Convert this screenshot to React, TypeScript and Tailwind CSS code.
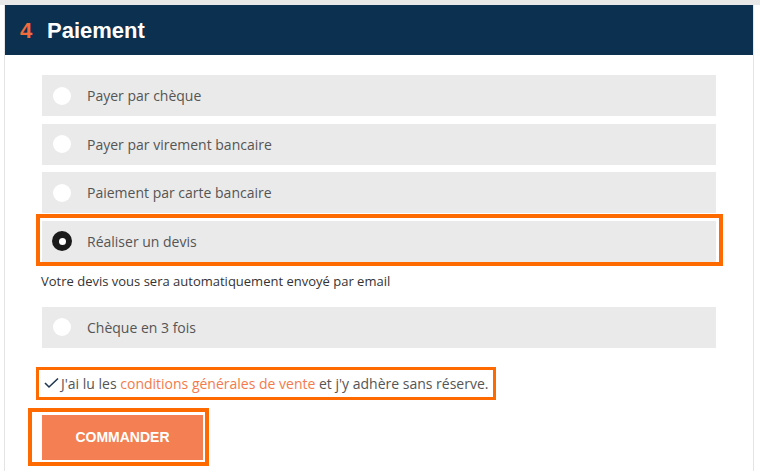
import React from "react";

function Radio({ checked }: { checked?: boolean }) {
  if (checked) {
    return (
      <span className="w-[20px] h-[20px] rounded-full bg-[#1a1a1a] flex items-center justify-center ml-[10px] mr-[15px]">
        <span className="w-[7px] h-[7px] rounded-full bg-white" />
      </span>
    );
  }
  return <span className="w-[18px] h-[18px] rounded-full bg-white ml-[11px] mr-[16px]" />;
}

function Option({ label, checked }: { label: string; checked?: boolean }) {
  return (
    <div className="relative h-[41px] bg-[#eaeaea] flex items-center text-[14px] text-[#555555]">
      <Radio checked={checked} />
      <span>{label}</span>
      {checked && (
        <div className="absolute top-[-7px] left-[-6px] right-[-7px] bottom-[-4px] border-4 border-[#ff6a00]" />
      )}
    </div>
  );
}

export default function App() {
  return (
    <div className="w-[760px] h-[471px] bg-white overflow-hidden font-['Open_Sans',sans-serif]">
      <div className="h-[5px] bg-[#e8e8e8]" />
      <div className="ml-[4px] w-[750px] h-[466px] border-l border-r border-[#e4e4e4]">
        <div className="h-[50px] bg-[#0c3050] flex items-center pl-[15px] font-['Liberation_Sans',Arial,sans-serif] font-bold text-[22px]">
          <span className="text-[#f26b3b] w-[27px]">4</span>
          <span className="text-white">Paiement</span>
        </div>
        <div className="px-[37px] pt-[20px] flex flex-col">
          <div className="flex flex-col gap-[7.5px]">
            <Option label="Payer par chèque" />
            <Option label="Payer par virement bancaire" />
            <Option label="Paiement par carte bancaire" />
            <Option label="Réaliser un devis" checked />
          </div>
          <div className="mt-[10px] h-[19px] leading-[19px] text-[13px] text-[#333333] -ml-[1px]">
            Votre devis vous sera automatiquement envoyé par email
          </div>
          <div className="mt-[16px]">
            <Option label="Chèque en 3 fois" />
          </div>
          <div className="mt-[19px] -ml-[6px] self-start h-[33px] border-[3px] border-[#ff6a00] flex items-center pl-[5px] pr-[5px] text-[14px] text-[#555555]">
            <svg width="15" height="12" viewBox="0 0 15 12" className="mr-[2px]">
              <polyline points="1,6 5,10 14,1.5" fill="none" stroke="#1f3550" strokeWidth="1.6" />
            </svg>
            <span>
              J'ai lu les <span className="text-[#f47a4c]">conditions générales de vente</span> et j'y adhère sans réserve.
            </span>
          </div>
          <div className="mt-[8px] -ml-[14px] self-start border-4 border-[#ff6a00] pl-[10px] pr-[2px] pt-[3px] pb-[2px]">
            <div className="w-[161px] h-[45px] bg-[#f47f53] flex items-center justify-center text-white font-bold text-[14px] font-['Liberation_Sans',Arial,sans-serif]">
              COMMANDER
            </div>
          </div>
        </div>
      </div>
    </div>
  );
}
